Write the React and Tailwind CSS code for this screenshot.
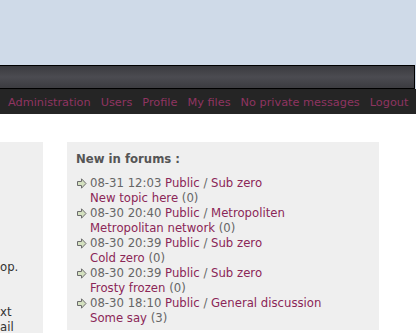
import React from "react";

const items = [
  { date: "08-31 12:03", forum: "Sub zero", topic: "New topic here", count: 0 },
  { date: "08-30 20:40", forum: "Metropoliten", topic: "Metropolitan network", count: 0 },
  { date: "08-30 20:39", forum: "Sub zero", topic: "Cold zero", count: 0 },
  { date: "08-30 20:39", forum: "Sub zero", topic: "Frosty frozen", count: 0 },
  { date: "08-30 18:10", forum: "General discussion", topic: "Some say", count: 3 },
];

function Arrow() {
  return (
    <svg width="11" height="11" viewBox="0 0 11 11" className="shrink-0">
      <path
        d="M1.5 3.5 H5.5 V0.8 L10 5.5 L5.5 10.2 V7.5 H1.5 Z"
        fill="#d4e0c0"
        stroke="#6b6b6b"
        strokeWidth="1"
        strokeLinejoin="miter"
      />
    </svg>
  );
}

const navLinks = ["Administration", "Users", "Profile", "My files", "No private messages", "Logout"];

export default function App() {
  return (
    <div
      className="w-[416px] h-[333px] overflow-hidden bg-white text-[11.7px] leading-[15px]"
      style={{ fontFamily: '"DejaVu Sans", Verdana, sans-serif' }}
    >
      {/* header */}
      <div className="h-[65px] bg-[#cfdae8]"></div>
      <div className="flex bg-[#cfdae8]">
        <div className="h-[24px] w-[415px] border border-l-0 border-black bg-gradient-to-b from-[#3b3b3f] via-[#4b4b51] to-[#3c3c40]"></div>
      </div>
      <div className="h-[25px] bg-[#252525] flex items-center gap-[10px] pl-[8px] pt-[1px] text-[11.3px] text-[#8f3461] whitespace-nowrap">
        {navLinks.map((l) => (
          <span key={l}>{l}</span>
        ))}
      </div>

      {/* content */}
      <div className="flex pt-[28px] gap-[24px]">
        <div className="w-[43px] h-[200px] bg-[#efefef] text-[#333] whitespace-nowrap overflow-hidden pt-[118px]">
          <div>op.</div>
          <div>&nbsp;</div>
          <div>&nbsp;</div>
          <div>xt</div>
          <div>ail</div>
        </div>
        <div className="w-[312px] h-[188px] bg-[#efefef] pl-[9px] pt-[10px]">
          <div className="font-bold text-[#555]">New in forums :</div>
          <div className="mt-[9px]">
            {items.map((it, i) => (
              <div key={i}>
                <div className="flex items-center gap-[3px] whitespace-nowrap">
                  <Arrow />
                  <span className="text-[#666]">
                    {it.date} <span className="text-[#8b2657]">Public</span> /{" "}
                    <span className="text-[#8b2657]">{it.forum}</span>
                  </span>
                </div>
                <div className="pl-[14px] whitespace-nowrap text-[#666]">
                  <span className="text-[#8b2657]">{it.topic}</span> ({it.count})
                </div>
              </div>
            ))}
          </div>
        </div>
      </div>
    </div>
  );
}
